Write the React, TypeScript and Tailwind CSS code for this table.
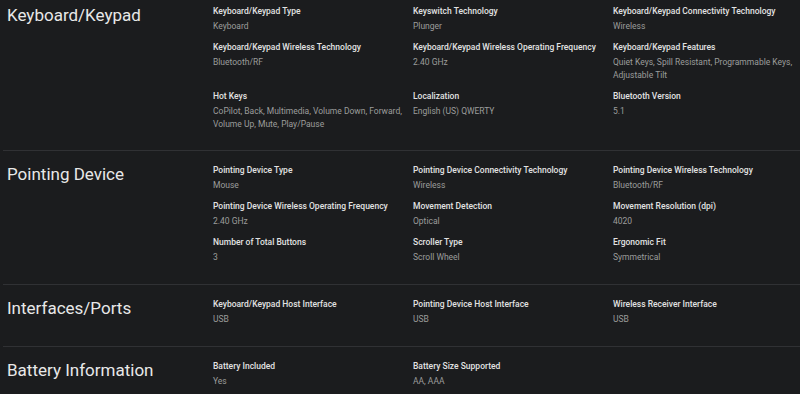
type Spec = { label: string; value: string };
type Section = { title: string; specs: Spec[] };

const sections: Section[] = [
  {
    title: "Keyboard/Keypad",
    specs: [
      { label: "Keyboard/Keypad Type", value: "Keyboard" },
      { label: "Keyswitch Technology", value: "Plunger" },
      { label: "Keyboard/Keypad Connectivity Technology", value: "Wireless" },
      { label: "Keyboard/Keypad Wireless Technology", value: "Bluetooth/RF" },
      { label: "Keyboard/Keypad Wireless Operating Frequency", value: "2.40 GHz" },
      {
        label: "Keyboard/Keypad Features",
        value: "Quiet Keys, Spill Resistant, Programmable Keys, Adjustable Tilt",
      },
      {
        label: "Hot Keys",
        value: "CoPilot, Back, Multimedia, Volume Down, Forward, Volume Up, Mute, Play/Pause",
      },
      { label: "Localization", value: "English (US) QWERTY" },
      { label: "Bluetooth Version", value: "5.1" },
    ],
  },
  {
    title: "Pointing Device",
    specs: [
      { label: "Pointing Device Type", value: "Mouse" },
      { label: "Pointing Device Connectivity Technology", value: "Wireless" },
      { label: "Pointing Device Wireless Technology", value: "Bluetooth/RF" },
      { label: "Pointing Device Wireless Operating Frequency", value: "2.40 GHz" },
      { label: "Movement Detection", value: "Optical" },
      { label: "Movement Resolution (dpi)", value: "4020" },
      { label: "Number of Total Buttons", value: "3" },
      { label: "Scroller Type", value: "Scroll Wheel" },
      { label: "Ergonomic Fit", value: "Symmetrical" },
    ],
  },
  {
    title: "Interfaces/Ports",
    specs: [
      { label: "Keyboard/Keypad Host Interface", value: "USB" },
      { label: "Pointing Device Host Interface", value: "USB" },
      { label: "Wireless Receiver Interface", value: "USB" },
    ],
  },
  {
    title: "Battery Information",
    specs: [
      { label: "Battery Included", value: "Yes" },
      { label: "Battery Size Supported", value: "AA, AAA" },
    ],
  },
];

export default function App() {
  return (
    <div
      className="min-h-[394px] w-[800px] overflow-hidden bg-[#1b1c1e] pl-[3px]"
      style={{ fontFamily: "Roboto, 'Liberation Sans', sans-serif" }}
    >
      {sections.map((section, i) => (
        <div
          key={section.title}
          className={`flex ${
            i === 0 ? "pt-[5px] pb-[19px]" : "border-t border-[#303134] pt-[13px] pb-[20px]"
          }`}
        >
          <h2 className="-mt-[2px] w-[210px] shrink-0 pl-[4px] text-[17px] leading-[24px] text-[#e8e8e8]">
            {section.title}
          </h2>
          <div className="grid grid-cols-[190px_190px_187px] gap-x-[10px] gap-y-[8px]">
            {section.specs.map((spec) => (
              <div key={spec.label}>
                <div className="text-[8.5px] font-medium leading-[13px] text-[#e2e2e2]">
                  {spec.label}
                </div>
                <div className="mt-[2px] text-[8.5px] leading-[13px] text-[#9c9c9c]">
                  {spec.value}
                </div>
              </div>
            ))}
          </div>
        </div>
      ))}
    </div>
  );
}
